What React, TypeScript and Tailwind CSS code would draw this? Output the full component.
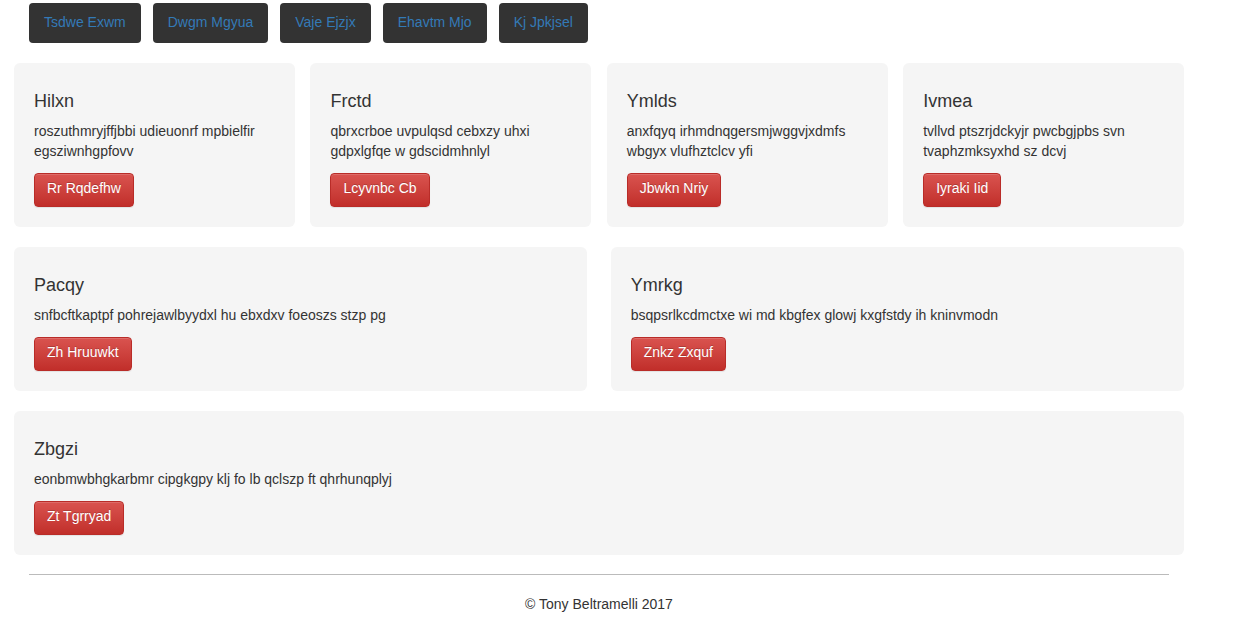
type CardData = { title: string; text: string; action: string };

const links = ["Tsdwe Exwm", "Dwgm Mgyua", "Vaje Ejzjx", "Ehavtm Mjo", "Kj Jpkjsel"];

const quarterCards: CardData[] = [
  { title: "Hilxn", text: "roszuthmryjffjbbi udieuonrf mpbielfir egsziwnhgpfovv", action: "Rr Rqdefhw" },
  { title: "Frctd", text: "qbrxcrboe uvpulqsd cebxzy uhxi gdpxlgfqe w gdscidmhnlyl", action: "Lcyvnbc Cb" },
  { title: "Ymlds", text: "anxfqyq irhmdnqgersmjwggvjxdmfs wbgyx vlufhztclcv yfi", action: "Jbwkn Nriy" },
  { title: "Ivmea", text: "tvllvd ptszrjdckyjr pwcbgjpbs svn tvaphzmksyxhd sz dcvj", action: "Iyraki Iid" },
];

const halfCards: CardData[] = [
  { title: "Pacqy", text: "snfbcftkaptpf pohrejawlbyydxl hu ebxdxv foeoszs stzp pg", action: "Zh Hruuwkt" },
  { title: "Ymrkg", text: "bsqpsrlkcdmctxe wi md kbgfex glowj kxgfstdy ih kninvmodn", action: "Znkz Zxquf" },
];

const fullCard: CardData = {
  title: "Zbgzi",
  text: "eonbmwbhgkarbmr cipgkgpy klj fo lb qclszp ft qhrhunqplyj",
  action: "Zt Tgrryad",
};

function Card({ card, width }: { card: CardData; width: string }) {
  return (
    <section className={`${width} rounded-md bg-[#f5f5f5] px-5 pt-7 pb-5`}>
      <h4 className="mb-[10px] text-lg leading-5 font-medium">{card.title}</h4>
      <p className="mb-3">{card.text}</p>
      <button
        type="button"
        className="block cursor-pointer rounded border border-[#b92c28] bg-linear-to-b from-[#d9534f] to-[#c12e2a] px-3 pt-1 pb-2 text-white shadow-[inset_0_1px_0_rgba(255,255,255,0.15),0_1px_1px_rgba(0,0,0,0.075)] [text-shadow:0_-1px_0_rgba(0,0,0,0.2)]"
      >
        {card.action}
      </button>
    </section>
  );
}

export default function App() {
  return (
    <div className="min-h-screen bg-white pt-[3px] pr-[52px] pl-[14px] font-['Liberation_Sans',Arial,sans-serif] text-sm leading-5 text-[#333333]">
      <div className="max-w-[1170px]">
        <nav className="mb-5 px-[15px]">
          <ul className="flex flex-wrap gap-3">
            {links.map((label) => (
              <li key={label}>
                <a href="#" className="block rounded bg-[#333333] px-[15px] pt-[9px] pb-[11px] text-[#337ab7]">
                  {label}
                </a>
              </li>
            ))}
          </ul>
        </nav>
        <main className="flex flex-col gap-5">
          <div className="flex justify-between">
            {quarterCards.map((card) => (
              <Card key={card.title} card={card} width="w-[24%]" />
            ))}
          </div>
          <div className="flex justify-between">
            {halfCards.map((card) => (
              <Card key={card.title} card={card} width="w-[49%]" />
            ))}
          </div>
          <Card card={fullCard} width="w-full" />
        </main>
        <footer className="mx-[15px] mt-[19px] border-t border-[#bbbbbb] pt-[19px] text-center">
          <p>© Tony Beltramelli 2017</p>
        </footer>
      </div>
    </div>
  );
}
